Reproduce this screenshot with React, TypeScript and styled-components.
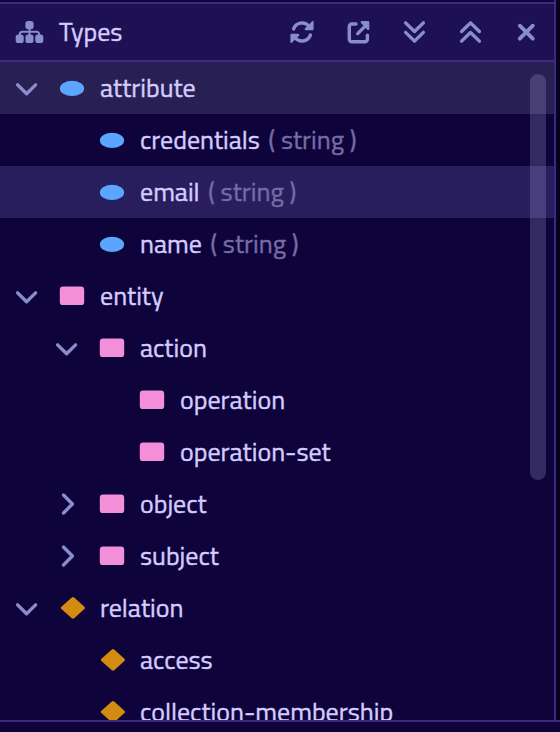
import React from "react";
import styled, { createGlobalStyle } from "styled-components";

const GlobalStyle = createGlobalStyle`
  * { box-sizing: border-box; }
  body { margin: 0; background: #07021f; overflow: hidden; }
`;

const Window = styled.div`
  width: 560px;
  height: 732px;
  display: flex;
  flex-direction: column;
  background: #07021f;
  color: #d5ccff;
  font-family: "Titillium Web", "Roboto", sans-serif;
  font-size: 26px;
  -webkit-text-stroke: 0.4px currentColor;
`;

const Panel = styled.section`
  width: 556px;
  height: 720px;
  display: flex;
  flex-direction: column;
  padding-top: 2px;
  background: #0e033a;
  border-right: 2px solid #3b2a80;
`;

const Header = styled.header`
  height: 60px;
  flex: none;
  display: flex;
  align-items: center;
  padding-left: 14px;
  background: #1d1153;
  border-top: 2px solid #3b2a80;
  border-bottom: 2px solid #3b2a80;
`;

const Title = styled.h1`
  flex: 1;
  margin: 0 0 0 13px;
  font-size: 26px;
  font-weight: 400;
  line-height: 56px;
`;

const Actions = styled.div`
  display: flex;
  gap: 24px;
  margin-right: 12px;
`;

const ActionButton = styled.button`
  width: 32px;
  height: 32px;
  padding: 0;
  border: 0;
  background: transparent;
  color: #8a8dcc;
`;

const Icon = styled.svg`
  display: block;
  width: 32px;
  height: 32px;
  flex: none;
  color: #8a8dcc;
  fill: none;
  stroke: currentColor;
  stroke-width: 3.4;
  stroke-linecap: round;
  stroke-linejoin: round;
`;

const TreeArea = styled.div`
  position: relative;
  flex: 1;
  min-height: 0;
  overflow: hidden;
`;

const Row = styled.div<{ $depth: number; $tone?: "selected" | "hovered" }>`
  height: 52px;
  display: flex;
  align-items: center;
  padding-left: ${(p) => 10 + p.$depth * 40}px;
  background: ${(p) =>
    p.$tone === "selected" ? "#281f52" : p.$tone === "hovered" ? "#281d5d" : "transparent"};
`;

const Toggle = styled.span`
  width: 46px;
  flex: none;
`;

const KindIcon = styled.svg`
  display: block;
  width: 32px;
  height: 32px;
  flex: none;
`;

const Label = styled.span`
  margin-left: 12px;
  line-height: 52px;
  white-space: pre;
`;

const ValueType = styled.span`
  margin-left: 8.4px;
  line-height: 52px;
  color: #766ba5;
  white-space: pre;
`;

const ScrollThumb = styled.div`
  position: absolute;
  top: 12px;
  right: 8px;
  width: 16px;
  height: 406px;
  border-radius: 8px;
  background: rgba(174, 169, 232, 0.24);
`;

const StatusStrip = styled.footer`
  height: 12px;
  background: #0e033a;
  border-top: 2px solid #3b2a80;
`;

type Kind = "attribute" | "entity" | "relation";

interface TypeNode {
  label: string;
  kind: Kind;
  depth: number;
  expanded?: boolean;
  valueType?: string;
  tone?: "selected" | "hovered";
}

const nodes: TypeNode[] = [
  { label: "attribute", kind: "attribute", depth: 0, expanded: true, tone: "selected" },
  { label: "credentials", kind: "attribute", depth: 1, valueType: "string" },
  { label: "email", kind: "attribute", depth: 1, valueType: "string", tone: "hovered" },
  { label: "name", kind: "attribute", depth: 1, valueType: "string" },
  { label: "entity", kind: "entity", depth: 0, expanded: true },
  { label: "action", kind: "entity", depth: 1, expanded: true },
  { label: "operation", kind: "entity", depth: 2 },
  { label: "operation-set", kind: "entity", depth: 2 },
  { label: "object", kind: "entity", depth: 1, expanded: false },
  { label: "subject", kind: "entity", depth: 1, expanded: false },
  { label: "relation", kind: "relation", depth: 0, expanded: true },
  { label: "access", kind: "relation", depth: 1 },
  { label: "collection-membership", kind: "relation", depth: 1 },
];

function HierarchyIcon() {
  return (
    <Icon viewBox="0 0 32 32">
      <path d="M15.5 11v10M5.8 20v-1.7a2.5 2.5 0 0 1 2.5-2.5h14.4a2.5 2.5 0 0 1 2.5 2.5V20" strokeWidth="2" />
      <g fill="currentColor" stroke="none">
        <rect x="11.4" y="4.9" width="8.2" height="8.4" rx="2.7" />
        <rect x="1.7" y="18.6" width="8" height="8.5" rx="2.7" />
        <rect x="11.5" y="18.6" width="8" height="8.5" rx="2.7" />
        <rect x="21.3" y="18.6" width="8" height="8.5" rx="2.7" />
      </g>
    </Icon>
  );
}

function RefreshIcon() {
  return (
    <Icon viewBox="0 0 32 32">
      <path d="M7.6 13A9 9 0 0 1 22.6 9.8M24.4 19.1A9 9 0 0 1 9.4 22.2" />
      <path
        d="M27.6 5.6a.8.8 0 0 0-1.4-.4l-7.2 7c-.8.9-.3 2 .8 2h6.6a1.2 1.2 0 0 0 1.2-1.2zM4.4 26.4a.8.8 0 0 0 1.4.4l7.2-7c.8-.9.3-2-.8-2H5.6a1.2 1.2 0 0 0-1.2 1.2z"
        fill="currentColor"
        stroke="none"
      />
    </Icon>
  );
}

function OpenIcon() {
  return (
    <Icon viewBox="0 0 32 32">
      <path d="M14 8H9.8a2.5 2.5 0 0 0-2.5 2.5v12.7a2.5 2.5 0 0 0 2.5 2.5h13.1a2.5 2.5 0 0 0 2.5-2.5v-4.1M15.7 17.6l9-9" strokeWidth="3.4" />
      <path d="M19.8 4.9h6.1a1.4 1.4 0 0 1 1.4 1.4v6.6c0 1.1-1.3 1.6-2 .8L19 6.9c-.8-.8-.3-2 .8-2z" fill="currentColor" stroke="none" />
    </Icon>
  );
}

function KindGlyph({ kind }: { kind: Kind }) {
  return (
    <KindIcon viewBox="0 0 32 32">
      {kind === "attribute" && <ellipse cx="16" cy="16.4" rx="12.1" ry="7.6" fill="#5ca5ff" />}
      {kind === "entity" && <rect x="3.8" y="6.5" width="24.4" height="18.6" rx="3.2" fill="#f28fd8" />}
      {kind === "relation" && (
        <path d="M15.8 5.5q1.2-.9 2.4 0l10.2 9.2q1.2 1.2 0 2.4L18.2 26.3q-1.2.9-2.4 0L5.4 17.1q-1.2-1.2 0-2.4z" fill="#d48c10" />
      )}
    </KindIcon>
  );
}

export default function App() {
  return (
    <>
      <GlobalStyle />
      <Window>
        <Panel>
          <Header>
            <HierarchyIcon />
            <Title>Types</Title>
            <Actions>
              <ActionButton aria-label="Refresh"><RefreshIcon /></ActionButton>
              <ActionButton aria-label="Open in window"><OpenIcon /></ActionButton>
              <ActionButton aria-label="Expand all">
                <Icon viewBox="0 0 32 32"><path d="M7.6 6.9l8.9 8.6 8.9-8.6M7.6 16.4l8.9 8.7 8.9-8.7" /></Icon>
              </ActionButton>
              <ActionButton aria-label="Collapse all">
                <Icon viewBox="0 0 32 32"><path d="M7.6 15.5l8.9-8.6 8.9 8.6M7.6 25.1l8.9-8.6 8.9 8.6" /></Icon>
              </ActionButton>
              <ActionButton aria-label="Close">
                <Icon viewBox="0 0 32 32"><path d="M9.8 9.7l13 13M22.8 9.7l-13 13" strokeWidth="3.8" /></Icon>
              </ActionButton>
            </Actions>
          </Header>
          <TreeArea>
            {nodes.map((node) => (
              <Row key={node.label} $depth={node.depth} $tone={node.tone}>
                <Toggle>
                  {node.expanded !== undefined && (
                    <Icon viewBox="0 0 32 32">
                      <path d={node.expanded ? "M7.6 12.9l9 8.9 9-8.9" : "M13.5 7l8.9 9-8.9 9"} strokeWidth="3.4" />
                    </Icon>
                  )}
                </Toggle>
                <KindGlyph kind={node.kind} />
                <Label>{node.label}</Label>
                {node.valueType && <ValueType>{`( ${node.valueType} )`}</ValueType>}
              </Row>
            ))}
            <ScrollThumb />
          </TreeArea>
        </Panel>
        <StatusStrip />
      </Window>
    </>
  );
}
